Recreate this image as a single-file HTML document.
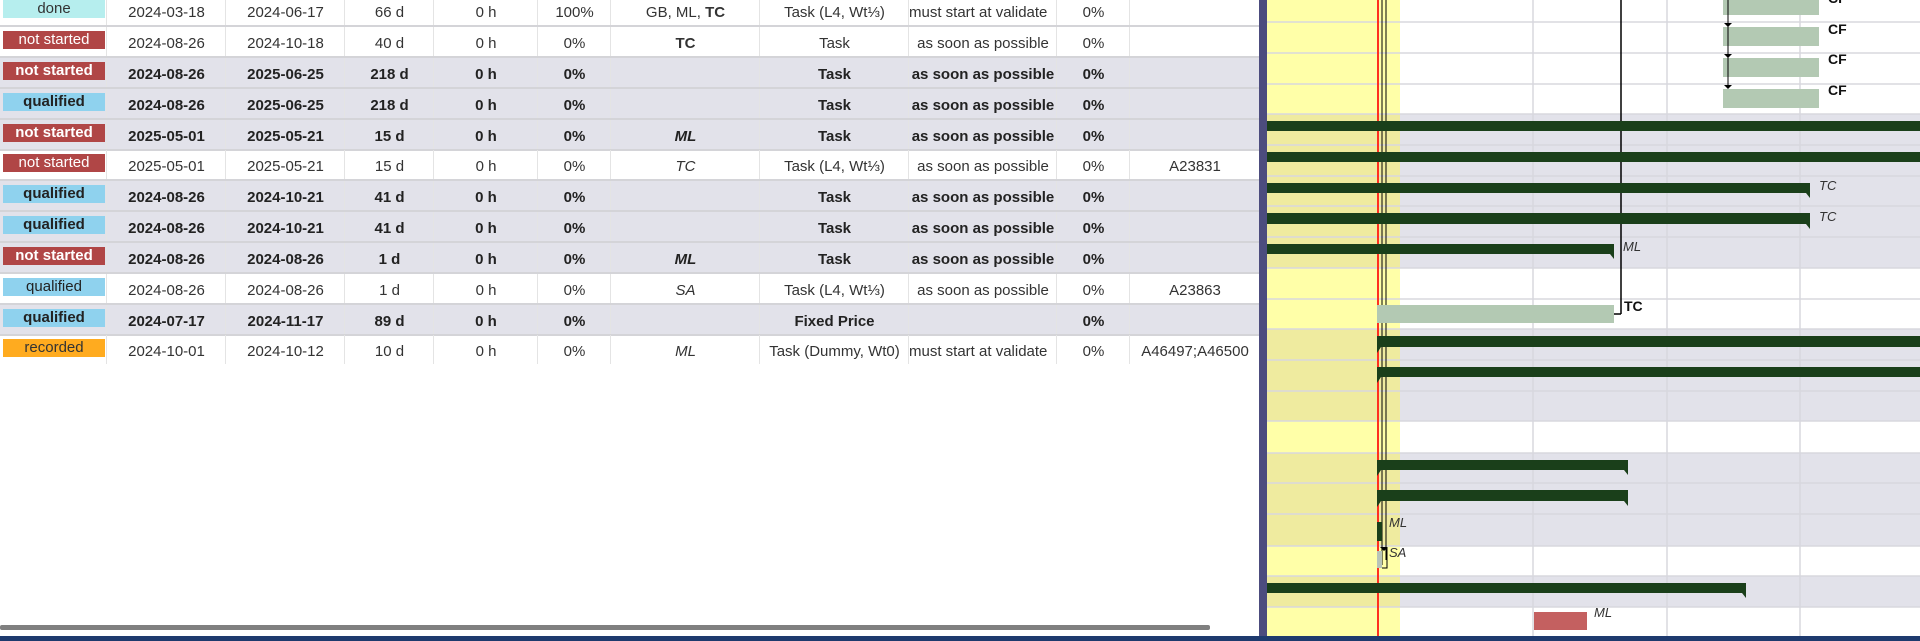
<!DOCTYPE html>
<html><head><meta charset="utf-8"><style>
html,body{margin:0;padding:0;width:1920px;height:641px;overflow:hidden;background:#fff;font-family:"Liberation Sans","DejaVu Sans",sans-serif;}
.row{position:absolute;left:0;width:1259px;height:31px;border-bottom:2px solid #d4d4d8;box-sizing:border-box;font-size:15px;color:#333;}
.g{background:#e2e2ea;font-weight:bold;color:#222;}
.c{position:absolute;top:0;height:29px;line-height:34px;text-align:center;border-left:1px solid #e4e4e4;white-space:nowrap;overflow:hidden;}
.b{position:absolute;left:3px;top:4px;width:102px;height:18px;line-height:18px;text-align:center;font-size:15px;}
.ns{background:#b04646;color:#fff}.q{background:#8fd2ee;color:#222}.d{background:#b6eeee;color:#333;font-weight:normal}.r{background:#ffab1f;color:#333}
.c1{left:106px;width:119px}.c2{left:225px;width:119px}.c3{left:344px;width:89px}.c4{left:433px;width:104px}.c5{left:537px;width:73px}.c6{left:610px;width:149px}.c7{left:759px;width:149px}.c8{left:908px;width:148px}.c9{left:1056px;width:73px}.c10{left:1129px;width:130px}
i{font-style:italic}
</style></head><body>

<div class="row" style="top:-4px"><div class="b d">done</div><div class="c c1">2024-03-18</div><div class="c c2">2024-06-17</div><div class="c c3">66 d</div><div class="c c4">0 h</div><div class="c c5">100%</div><div class="c c6">GB, ML, <b>TC</b></div><div class="c c7">Task (L4, Wt⅓)</div><div class="c c8" style="text-align:left">must start at validate</div><div class="c c9">0%</div><div class="c c10"></div></div>
<div class="row" style="top:27px"><div class="b ns">not started</div><div class="c c1">2024-08-26</div><div class="c c2">2024-10-18</div><div class="c c3">40 d</div><div class="c c4">0 h</div><div class="c c5">0%</div><div class="c c6"><b>TC</b></div><div class="c c7">Task</div><div class="c c8">as soon as possible</div><div class="c c9">0%</div><div class="c c10"></div></div>
<div class="row g" style="top:58px"><div class="b ns">not started</div><div class="c c1">2024-08-26</div><div class="c c2">2025-06-25</div><div class="c c3">218 d</div><div class="c c4">0 h</div><div class="c c5">0%</div><div class="c c6"></div><div class="c c7">Task</div><div class="c c8">as soon as possible</div><div class="c c9">0%</div><div class="c c10"></div></div>
<div class="row g" style="top:89px"><div class="b q">qualified</div><div class="c c1">2024-08-26</div><div class="c c2">2025-06-25</div><div class="c c3">218 d</div><div class="c c4">0 h</div><div class="c c5">0%</div><div class="c c6"></div><div class="c c7">Task</div><div class="c c8">as soon as possible</div><div class="c c9">0%</div><div class="c c10"></div></div>
<div class="row g" style="top:120px"><div class="b ns">not started</div><div class="c c1">2025-05-01</div><div class="c c2">2025-05-21</div><div class="c c3">15 d</div><div class="c c4">0 h</div><div class="c c5">0%</div><div class="c c6"><i>ML</i></div><div class="c c7">Task</div><div class="c c8">as soon as possible</div><div class="c c9">0%</div><div class="c c10"></div></div>
<div class="row" style="top:150px"><div class="b ns">not started</div><div class="c c1">2025-05-01</div><div class="c c2">2025-05-21</div><div class="c c3">15 d</div><div class="c c4">0 h</div><div class="c c5">0%</div><div class="c c6"><i>TC</i></div><div class="c c7">Task (L4, Wt⅓)</div><div class="c c8">as soon as possible</div><div class="c c9">0%</div><div class="c c10">A23831</div></div>
<div class="row g" style="top:181px"><div class="b q">qualified</div><div class="c c1">2024-08-26</div><div class="c c2">2024-10-21</div><div class="c c3">41 d</div><div class="c c4">0 h</div><div class="c c5">0%</div><div class="c c6"></div><div class="c c7">Task</div><div class="c c8">as soon as possible</div><div class="c c9">0%</div><div class="c c10"></div></div>
<div class="row g" style="top:212px"><div class="b q">qualified</div><div class="c c1">2024-08-26</div><div class="c c2">2024-10-21</div><div class="c c3">41 d</div><div class="c c4">0 h</div><div class="c c5">0%</div><div class="c c6"></div><div class="c c7">Task</div><div class="c c8">as soon as possible</div><div class="c c9">0%</div><div class="c c10"></div></div>
<div class="row g" style="top:243px"><div class="b ns">not started</div><div class="c c1">2024-08-26</div><div class="c c2">2024-08-26</div><div class="c c3">1 d</div><div class="c c4">0 h</div><div class="c c5">0%</div><div class="c c6"><i>ML</i></div><div class="c c7">Task</div><div class="c c8">as soon as possible</div><div class="c c9">0%</div><div class="c c10"></div></div>
<div class="row" style="top:274px"><div class="b q" style="font-weight:normal">qualified</div><div class="c c1">2024-08-26</div><div class="c c2">2024-08-26</div><div class="c c3">1 d</div><div class="c c4">0 h</div><div class="c c5">0%</div><div class="c c6"><i>SA</i></div><div class="c c7">Task (L4, Wt⅓)</div><div class="c c8">as soon as possible</div><div class="c c9">0%</div><div class="c c10">A23863</div></div>
<div class="row g" style="top:305px"><div class="b q">qualified</div><div class="c c1">2024-07-17</div><div class="c c2">2024-11-17</div><div class="c c3">89 d</div><div class="c c4">0 h</div><div class="c c5">0%</div><div class="c c6"></div><div class="c c7">Fixed Price</div><div class="c c8"></div><div class="c c9">0%</div><div class="c c10"></div></div>
<div class="row" style="top:335px;border-bottom:none"><div class="b r">recorded</div><div class="c c1">2024-10-01</div><div class="c c2">2024-10-12</div><div class="c c3">10 d</div><div class="c c4">0 h</div><div class="c c5">0%</div><div class="c c6"><i>ML</i></div><div class="c c7">Task (Dummy, Wt0)</div><div class="c c8" style="text-align:left">must start at validate</div><div class="c c9">0%</div><div class="c c10">A46497;A46500</div></div>

<div style="position:absolute;left:0;top:625px;width:1210px;height:5px;background:#808080;border-radius:2px"></div>

<svg style="position:absolute;left:0;top:0" width="1920" height="641" viewBox="0 0 1920 641">
<g font-family="Liberation Sans, sans-serif" font-size="14">
<rect x="1267" y="0" width="653" height="636" fill="#fff"/>
<rect x="1267" y="114" width="653" height="154" fill="#e2e2ea"/>
<rect x="1267" y="329" width="653" height="92" fill="#e2e2ea"/>
<rect x="1267" y="453" width="653" height="93" fill="#e2e2ea"/>
<rect x="1267" y="576" width="653" height="31" fill="#e2e2ea"/>
<rect x="1267" y="0" width="133" height="636" fill="#ffffa8"/>
<rect x="1267" y="114" width="133" height="154" fill="#efeb9f"/>
<rect x="1267" y="329" width="133" height="92" fill="#efeb9f"/>
<rect x="1267" y="453" width="133" height="93" fill="#efeb9f"/>
<rect x="1267" y="576" width="133" height="31" fill="#efeb9f"/>
<g stroke="#d8d8de" stroke-width="1.5">
<line x1="1267" x2="1920" y1="22" y2="22"/><line x1="1267" x2="1920" y1="53" y2="53"/><line x1="1267" x2="1920" y1="84" y2="84"/><line x1="1267" x2="1920" y1="114" y2="114"/><line x1="1267" x2="1920" y1="145" y2="145"/><line x1="1267" x2="1920" y1="176" y2="176"/><line x1="1267" x2="1920" y1="206" y2="206"/><line x1="1267" x2="1920" y1="237" y2="237"/><line x1="1267" x2="1920" y1="268" y2="268"/><line x1="1267" x2="1920" y1="299" y2="299"/><line x1="1267" x2="1920" y1="329" y2="329"/><line x1="1267" x2="1920" y1="360" y2="360"/><line x1="1267" x2="1920" y1="391" y2="391"/><line x1="1267" x2="1920" y1="421" y2="421"/><line x1="1267" x2="1920" y1="453" y2="453"/><line x1="1267" x2="1920" y1="483" y2="483"/><line x1="1267" x2="1920" y1="514" y2="514"/><line x1="1267" x2="1920" y1="546" y2="546"/><line x1="1267" x2="1920" y1="576" y2="576"/><line x1="1267" x2="1920" y1="607" y2="607"/>
<line x1="1533" x2="1533" y1="0" y2="636"/><line x1="1667" x2="1667" y1="0" y2="636"/><line x1="1800" x2="1800" y1="0" y2="636"/>
</g>
<rect x="1259" y="0" width="8" height="636" fill="#4c4c7e"/>
<line x1="1378" x2="1378" y1="0" y2="636" stroke="#ff3020" stroke-width="2"/>
<line x1="1382" x2="1382" y1="0" y2="565" stroke="#000" stroke-width="1"/>
<line x1="1386" x2="1386" y1="0" y2="560" stroke="#000" stroke-width="1"/>
<!-- CF bars -->
<g fill="#b3c9b3"><rect x="1723" y="0" width="96" height="15"/><rect x="1723" y="27" width="96" height="19"/><rect x="1723" y="58" width="96" height="19"/><rect x="1723" y="89" width="96" height="19"/></g>
<line x1="1728" x2="1728" y1="0" y2="88" stroke="#000"/>
<g fill="#000"><path d="M1724 23h8l-4 4z"/><path d="M1724 54h8l-4 4z"/><path d="M1724 85h8l-4 4z"/></g>
<g font-weight="bold" font-size="14" fill="#111"><text x="1828" y="3">CF</text><text x="1828" y="34">CF</text><text x="1828" y="64">CF</text><text x="1828" y="95">CF</text></g>
<line x1="1621" x2="1621" y1="0" y2="314" stroke="#000" stroke-width="1.5"/>
<line x1="1614" x2="1621" y1="314" y2="314" stroke="#000" stroke-width="1.5"/>
<g fill="#1a3f1a">
<rect x="1267" y="121" width="653" height="10"/>
<rect x="1267" y="152" width="653" height="10"/>
<rect x="1267" y="183" width="543" height="10"/><path d="M1806 193h4v5z"/>
<rect x="1267" y="213" width="543" height="11"/><path d="M1806 224h4v5z"/>
<rect x="1267" y="244" width="347" height="10"/><path d="M1610 254h4v5z"/>
<rect x="1377" y="336" width="543" height="11"/><path d="M1377 347h4l-4 6z"/>
<rect x="1377" y="367" width="543" height="10"/><path d="M1377 377h4l-4 6z"/>
<rect x="1377" y="460" width="251" height="10"/><path d="M1377 470h4l-4 6z"/><path d="M1624 470h4v5z"/>
<rect x="1377" y="490" width="251" height="11"/><path d="M1377 501h4l-4 6z"/><path d="M1624 501h4v5z"/>
<rect x="1377" y="522" width="5" height="19"/>
<rect x="1267" y="583" width="479" height="10"/><path d="M1742 593h4v5z"/>
</g>
<rect x="1377" y="305" width="237" height="18" fill="#b3c9b3"/>
<rect x="1377" y="551" width="5" height="17" fill="#b8c4b8"/>
<path d="M1380 547h8l-4 4z" fill="#000"/>
<path d="M1382 568h5v-20" stroke="#000" fill="none"/>
<rect x="1534" y="612" width="53" height="18" fill="#c46060"/>
<g font-style="italic" font-size="13" fill="#333">
<text x="1819" y="190">TC</text><text x="1819" y="221">TC</text><text x="1623" y="251">ML</text>
<text x="1389" y="527">ML</text><text x="1389" y="557">SA</text><text x="1594" y="617">ML</text>
</g>
<text x="1624" y="311" font-weight="bold" font-size="14" fill="#111">TC</text>
</g>
<rect x="0" y="636" width="1920" height="5" fill="#1e3a6e"/>
</svg>
</body></html>
